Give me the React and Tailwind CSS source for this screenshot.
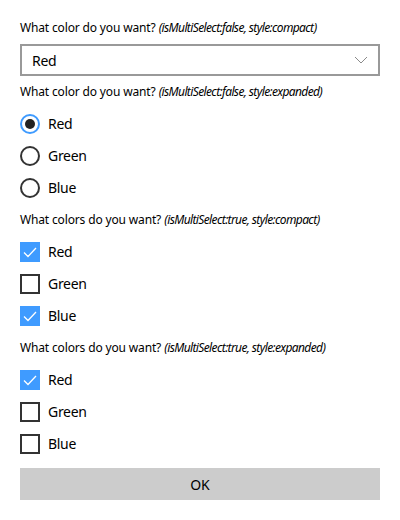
import React from "react";

const font = { fontFamily: '"Noto Sans", "Open Sans", sans-serif' };

function Label({ main, extra }) {
  return (
    <div className="h-4 text-[12px] leading-4 text-black whitespace-nowrap">
      <span className="tracking-[-0.15px]">{main}</span>{" "}
      <i className="tracking-[-0.62px]">{extra}</i>
    </div>
  );
}

function Radio({ label, checked }) {
  return (
    <div className="h-8 flex items-center gap-2">
      <div
        className={
          "w-5 h-5 rounded-full border-2 flex items-center justify-center " +
          (checked ? "border-[#3f9bff]" : "border-[#333333]")
        }
      >
        {checked && <div className="w-[10px] h-[10px] rounded-full bg-[#222222]" />}
      </div>
      <span className="text-[14px] leading-5 tracking-[-0.3px] text-black">{label}</span>
    </div>
  );
}

function Check({ label, checked }) {
  return (
    <div className="h-8 flex items-center gap-2">
      {checked ? (
        <div className="w-5 h-5 bg-[#3f9bff] flex items-center justify-center">
          <svg width="14" height="11" viewBox="0 0 14 11">
            <path d="M1 5.5 L5 9.5 L13 1" fill="none" stroke="white" strokeWidth="1.3" />
          </svg>
        </div>
      ) : (
        <div className="w-5 h-5 border-2 border-[#333333]" />
      )}
      <span className="text-[14px] leading-5 tracking-[-0.3px] text-black">{label}</span>
    </div>
  );
}

export default function App() {
  return (
    <div className="w-[400px] h-[520px] bg-white px-5 pt-5 flex flex-col gap-2" style={font}>
      <Label main="What color do you want?" extra="(isMultiSelect:false, style:compact)" />
      <div className="h-8 border-2 border-[#999999] flex items-center justify-between pl-[10px] pr-[10px]">
        <span className="text-[14px] tracking-[-0.3px] text-black">Red</span>
        <svg width="14" height="8" viewBox="0 0 14 8">
          <path d="M1 1 L7 7 L13 1" fill="none" stroke="#8a8a8a" strokeWidth="1" />
        </svg>
      </div>
      <Label main="What color do you want?" extra="(isMultiSelect:false, style:expanded)" />
      <div className="flex flex-col">
        <Radio label="Red" checked />
        <Radio label="Green" />
        <Radio label="Blue" />
      </div>
      <Label main="What colors do you want?" extra="(isMultiSelect:true, style:compact)" />
      <div className="flex flex-col">
        <Check label="Red" checked />
        <Check label="Green" />
        <Check label="Blue" checked />
      </div>
      <Label main="What colors do you want?" extra="(isMultiSelect:true, style:expanded)" />
      <div className="flex flex-col">
        <Check label="Red" checked />
        <Check label="Green" />
        <Check label="Blue" />
      </div>
      <div className="h-8 bg-[#cccccc] flex items-center justify-center text-[14px] text-black">OK</div>
    </div>
  );
}
